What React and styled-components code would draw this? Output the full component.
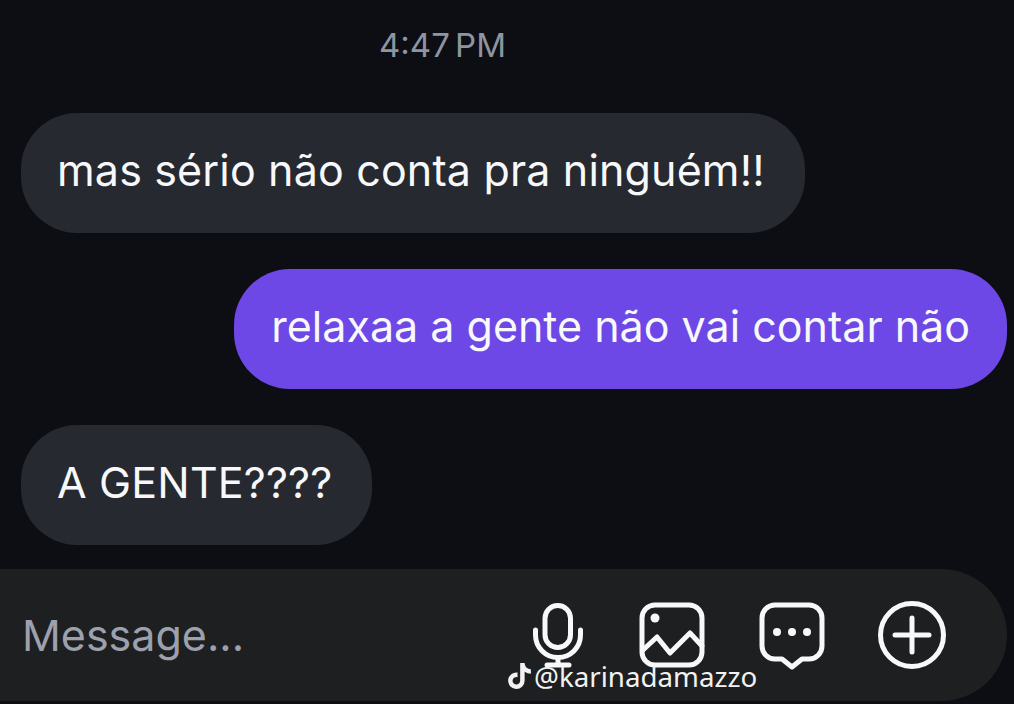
import React from "react";
import styled, { createGlobalStyle } from "styled-components";
import { FaTiktok } from "react-icons/fa";

const GlobalStyle = createGlobalStyle`
  html, body {
    margin: 0;
    padding: 0;
    background: #0c0e14;
  }
`;

function MicIcon() {
  return (
    <Icon viewBox="0 0 70 70">
      <rect x="22" y="5.5" width="25.5" height="42" rx="12.75" />
      <path d="M12.5 30v5a22.5 22.5 0 0 0 45 0v-5" />
      <path d="M35 58v6" />
      <path d="M24 65h22" />
    </Icon>
  );
}

function ImageIcon() {
  return (
    <Icon viewBox="0 0 70 70">
      <rect x="5" y="5" width="60" height="60" rx="13" />
      <circle className="solid" cx="18" cy="18" r="4.5" />
      <path d="M6 50l14-13 13 16 20-20 12 13" />
    </Icon>
  );
}

function ChatIcon() {
  return (
    <Icon viewBox="0 0 70 70">
      <path d="M18 5h34a13 13 0 0 1 13 13v28a13 13 0 0 1-13 13h-7l-10 8-10-8h-7a13 13 0 0 1-13-13v-28a13 13 0 0 1 13-13z" />
      <circle className="solid" cx="20" cy="32" r="4" />
      <circle className="solid" cx="35" cy="32" r="4" />
      <circle className="solid" cx="50" cy="32" r="4" />
    </Icon>
  );
}

function PlusIcon() {
  return (
    <Icon viewBox="0 0 70 70">
      <circle cx="35" cy="35" r="31.5" />
      <path d="M35 18v34" />
      <path d="M18 35h34" />
    </Icon>
  );
}

export default function App() {
  return (
    <Page>
      <GlobalStyle />
      <Timestamp>4:47 PM</Timestamp>
      <Thread>
        <Bubble>mas sério não conta pra ninguém!!</Bubble>
        <Bubble $mine>relaxaa a gente não vai contar não</Bubble>
        <Bubble>A GENTE????</Bubble>
      </Thread>
      <Composer>
        <Placeholder>Message...</Placeholder>
        <IconRow>
          <MicSlot>
            <MicIcon />
          </MicSlot>
          <ImageIcon />
          <ChatIcon />
          <PlusIcon />
        </IconRow>
        <Watermark>
          <FaTiktok />
          <span>@karinadamazzo</span>
        </Watermark>
      </Composer>
    </Page>
  );
}

const Page = styled.div`
  width: 1014px;
  height: 704px;
  overflow: hidden;
  box-sizing: border-box;
  padding-top: 26px;
  background: #0c0e14;
  font-family: Inter, "Liberation Sans", sans-serif;
`;

const Timestamp = styled.div`
  padding-left: 379px;
  height: 38px;
  line-height: 38px;
  font-size: 33px;
  word-spacing: -4px;
  color: #8e95a0;
`;

const Thread = styled.div`
  display: flex;
  flex-direction: column;
  gap: 36px;
  margin-top: 49px;
  padding: 0 7px 0 21px;
`;

const Bubble = styled.div`
  align-self: ${(p) => (p.$mine ? "flex-end" : "flex-start")};
  box-sizing: border-box;
  height: 120px;
  padding: ${(p) => (p.$mine ? "0 37px 6px 37px" : "0 40px 6px 36px")};
  display: flex;
  align-items: center;
  border-radius: 56px;
  font-size: 43px;
  letter-spacing: ${(p) => (p.$mine ? "0" : "0.16px")};
  color: #f7f8fa;
  white-space: nowrap;
  background: ${(p) => (p.$mine ? "#6d48e6" : "#262930")};
`;

const Composer = styled.div`
  position: relative;
  width: 1007px;
  height: 132px;
  margin-top: 24px;
  box-sizing: border-box;
  padding: 0 60px 0 22px;
  display: flex;
  align-items: center;
  justify-content: space-between;
  background: #1e1f21;
  border-radius: 0 66px 66px 0;
`;

const Placeholder = styled.div`
  font-size: 43px;
  color: #9ca1ad;
`;

const IconRow = styled.div`
  display: flex;
  align-items: center;
  gap: 50px;
`;

const MicSlot = styled.div`
  display: flex;
  margin-right: -6px;
`;

const Icon = styled.svg`
  display: block;
  width: 70px;
  height: 70px;
  fill: none;
  stroke: #f7f8fa;
  stroke-width: 5;
  stroke-linecap: round;
  stroke-linejoin: round;

  .solid {
    fill: #f7f8fa;
    stroke: none;
  }
`;

const Watermark = styled.div`
  position: absolute;
  left: 508px;
  top: 90px;
  display: flex;
  align-items: center;
  gap: 3px;
  font-family: "Noto Sans", sans-serif;
  font-size: 27.7px;
  line-height: 34px;
  color: #f2f2f2;

  svg {
    width: 23px;
    height: 26px;
  }
`;
